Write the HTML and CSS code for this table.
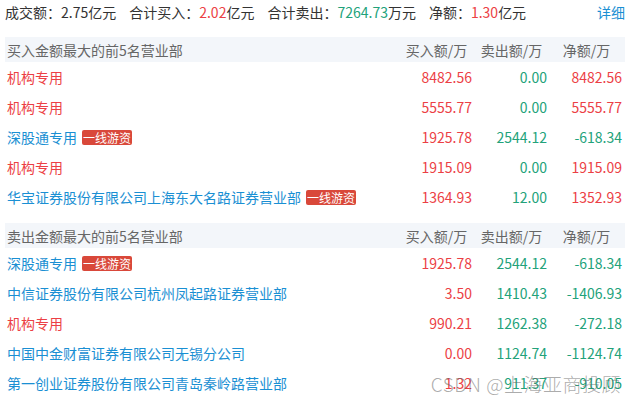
FILE: index.html
```html
<!DOCTYPE html>
<html lang="zh-CN">
<head>
    <meta charset="UTF-8">
    <meta name="viewport" content="width=device-width, initial-scale=1.0">
    <title>龙虎榜</title>
    <link rel="stylesheet" href="styles.css">
</head>
<body>
    <div class="summary">
        <span class="item">成交额：2.75亿元</span>
        <span class="item">合计买入：<em class="up">2.02</em>亿元</span>
        <span class="item">合计卖出：<em class="down">7264.73</em>万元</span>
        <span class="item">净额：<em class="up">1.30</em>亿元</span>
        <a class="more" href="#">详细</a>
    </div>

    <div class="board">
        <div class="row head">
            <div class="name">买入金额最大的前5名营业部</div>
            <div class="num">买入额/万</div>
            <div class="num">卖出额/万</div>
            <div class="num">净额/万</div>
        </div>
        <div class="row">
            <div class="name up">机构专用</div>
            <div class="num up">8482.56</div>
            <div class="num down">0.00</div>
            <div class="num up">8482.56</div>
        </div>
        <div class="row">
            <div class="name up">机构专用</div>
            <div class="num up">5555.77</div>
            <div class="num down">0.00</div>
            <div class="num up">5555.77</div>
        </div>
        <div class="row">
            <div class="name link">深股通专用<span class="tag">一线游资</span></div>
            <div class="num up">1925.78</div>
            <div class="num down">2544.12</div>
            <div class="num down">-618.34</div>
        </div>
        <div class="row">
            <div class="name up">机构专用</div>
            <div class="num up">1915.09</div>
            <div class="num down">0.00</div>
            <div class="num up">1915.09</div>
        </div>
        <div class="row">
            <div class="name link">华宝证券股份有限公司上海东大名路证券营业部<span class="tag">一线游资</span></div>
            <div class="num up">1364.93</div>
            <div class="num down">12.00</div>
            <div class="num up">1352.93</div>
        </div>
    </div>

    <div class="board">
        <div class="row head">
            <div class="name">卖出金额最大的前5名营业部</div>
            <div class="num">买入额/万</div>
            <div class="num">卖出额/万</div>
            <div class="num">净额/万</div>
        </div>
        <div class="row">
            <div class="name link">深股通专用<span class="tag">一线游资</span></div>
            <div class="num up">1925.78</div>
            <div class="num down">2544.12</div>
            <div class="num down">-618.34</div>
        </div>
        <div class="row">
            <div class="name link">中信证券股份有限公司杭州凤起路证券营业部</div>
            <div class="num up">3.50</div>
            <div class="num down">1410.43</div>
            <div class="num down">-1406.93</div>
        </div>
        <div class="row">
            <div class="name up">机构专用</div>
            <div class="num up">990.21</div>
            <div class="num down">1262.38</div>
            <div class="num down">-272.18</div>
        </div>
        <div class="row">
            <div class="name link">中国中金财富证券有限公司无锡分公司</div>
            <div class="num up">0.00</div>
            <div class="num down">1124.74</div>
            <div class="num down">-1124.74</div>
        </div>
        <div class="row">
            <div class="name link">第一创业证券股份有限公司青岛秦岭路营业部</div>
            <div class="num up">1.32</div>
            <div class="num down">911.37</div>
            <div class="num down">-910.05</div>
        </div>
    </div>

    <div class="watermark">CSDN @上海亚商投顾</div>
</body>
</html>
```

FILE: styles.css
```css
body {
    margin: 0;
    padding: 0 9px 0 5px;
    font-family: "Noto Sans CJK SC", "Microsoft YaHei", sans-serif;
    font-size: 14px;
    color: #333;
    background: #fff;
    position: relative;
    height: 402px;
    overflow: hidden;
}
em {
    font-style: normal;
}
.up {
    color: #ec3f45;
}
.down {
    color: #22a27a;
}
.link {
    color: #1a8fd3;
}
.summary {
    display: flex;
    align-items: center;
    height: 23px;
    margin-bottom: 14px;
}
.summary .item {
    margin-right: 13px;
}
.summary .more {
    margin-left: auto;
    color: #1a8fd3;
    text-decoration: none;
}
.board {
    margin-bottom: 11px;
}
.row {
    display: grid;
    grid-template-columns: 1fr 75px 75px 75px;
    align-items: center;
    height: 30px;
    padding: 0 3px 0 2px;
}
.row.head {
    height: 25px;
    background: #f3f6fa;
    color: #666;
}
.num {
    text-align: right;
}
.head .num {
    text-align: center;
    padding-left: 4px;
}
.name {
    display: flex;
    align-items: center;
    white-space: nowrap;
}
.tag {
    margin-left: 5px;
    padding: 0 1px;
    height: 15px;
    line-height: 15px;
    font-size: 12px;
    color: #fff;
    background: #d9483a;
    border-radius: 2px;
}
.watermark {
    position: absolute;
    right: 13px;
    bottom: 5px;
    font-size: 19px;
    font-weight: 300;
    color: rgba(100, 100, 100, 0.55);
    letter-spacing: 0.5px;
}
```
